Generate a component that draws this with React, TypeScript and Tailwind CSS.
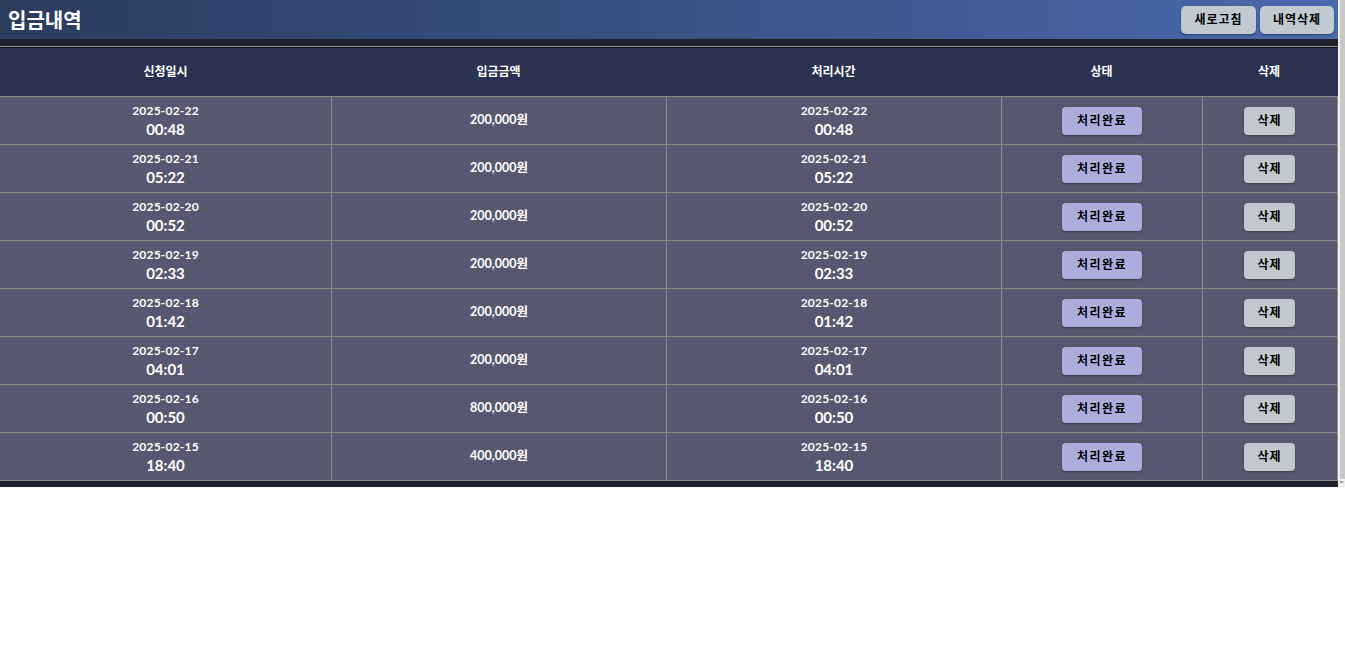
import React from "react";

const rows = [
  { d: "2025-02-22", t: "00:48", amt: "200,000원" },
  { d: "2025-02-21", t: "05:22", amt: "200,000원" },
  { d: "2025-02-20", t: "00:52", amt: "200,000원" },
  { d: "2025-02-19", t: "02:33", amt: "200,000원" },
  { d: "2025-02-18", t: "01:42", amt: "200,000원" },
  { d: "2025-02-17", t: "04:01", amt: "200,000원" },
  { d: "2025-02-16", t: "00:50", amt: "800,000원" },
  { d: "2025-02-15", t: "18:40", amt: "400,000원" },
];

const font = { fontFamily: "Lato, 'Noto Sans CJK KR', sans-serif" };

function DateCell({ d, t, cls }: { d: string; t: string; cls?: string }) {
  return (
    <div className={"flex flex-col items-center justify-center text-white font-bold leading-none " + (cls ?? "")}>
      <span className="text-[12px] leading-[18px] tracking-[0.2px]">{d}</span>
      <span className="text-[15px] leading-[19px]">{t}</span>
    </div>
  );
}

export default function App() {
  return (
    <div className="w-[1345px] h-[648px] bg-white" style={font}>
      <div className="flex h-[487px]">
        <div className="w-[1338px] flex flex-col bg-[#1e202c]">
          <div className="h-[39px] flex items-center justify-between pl-2 pr-1 bg-gradient-to-r from-[#2b3c5d] to-[#4a69ae]">
            <h1 className="text-white text-[20px] font-bold" style={{ fontFamily: "'Noto Sans CJK KR', sans-serif" }}>
              입금내역
            </h1>
            <div className="flex gap-1">
              <button className="w-[75px] h-[28px] rounded-[5px] bg-[#c1c9d1] text-black text-[12px] font-bold tracking-[1px] shadow-[0_1px_2px_rgba(0,0,0,0.4)]">
                새로고침
              </button>
              <button className="w-[74px] h-[28px] rounded-[5px] bg-[#c1c9d1] text-black text-[12px] font-bold tracking-[1px] shadow-[0_1px_2px_rgba(0,0,0,0.4)]">
                내역삭제
              </button>
            </div>
          </div>
          <div className="h-[7px] bg-[#1e202c]" />
          <div className="h-px bg-[#8c8c8c]" />
          <div className="h-px bg-[#111218]" />
          <div className="grid grid-cols-[331px_335px_335px_201px_134px] h-[48px] bg-[#2b3150] text-white text-[12px] font-bold items-center text-center">
            <div>신청일시</div>
            <div>입금금액</div>
            <div>처리시간</div>
            <div>상태</div>
            <div>삭제</div>
          </div>
          {rows.map((r, i) => (
            <div
              key={i}
              className="grid grid-cols-[331px_335px_335px_201px_134px] h-[48px] bg-[#57586f] border-t border-[#8c8c8c] border-r"
            >
              <DateCell d={r.d} t={r.t} />
              <div className="border-l border-[#8c8c8c] flex items-center justify-center text-white text-[12.5px] font-bold">
                {r.amt}
              </div>
              <DateCell d={r.d} t={r.t} cls="border-l border-[#8c8c8c]" />
              <div className="border-l border-[#8c8c8c] flex items-center justify-center">
                <button className="w-[80px] h-[28px] rounded-[4px] bg-[#abaedd] text-black text-[12px] font-bold tracking-[1.5px] shadow-[0_1px_2px_rgba(0,0,0,0.4)]">
                  처리완료
                </button>
              </div>
              <div className="border-l border-[#8c8c8c] flex items-center justify-center">
                <button className="w-[51px] h-[28px] rounded-[4px] bg-[#c1c8ce] text-black text-[12px] font-bold tracking-[1px] shadow-[0_1px_2px_rgba(0,0,0,0.4)]">
                  삭제
                </button>
              </div>
            </div>
          ))}
          <div className="h-px bg-[#8c8c8c]" />
          <div className="flex-1 bg-[#1e202c]" />
        </div>
        <div className="w-[7px] flex flex-col bg-[#f1f1f1]">
          <div className="flex-1 ml-[2px] bg-[#c8c8c8]" />
          <div className="h-[8px] flex items-center justify-center">
            <svg width="5" height="4" viewBox="0 0 5 4">
              <path d="M0 0 L5 0 L2.5 3 Z" fill="#a3a3a3" />
            </svg>
          </div>
        </div>
      </div>
    </div>
  );
}
